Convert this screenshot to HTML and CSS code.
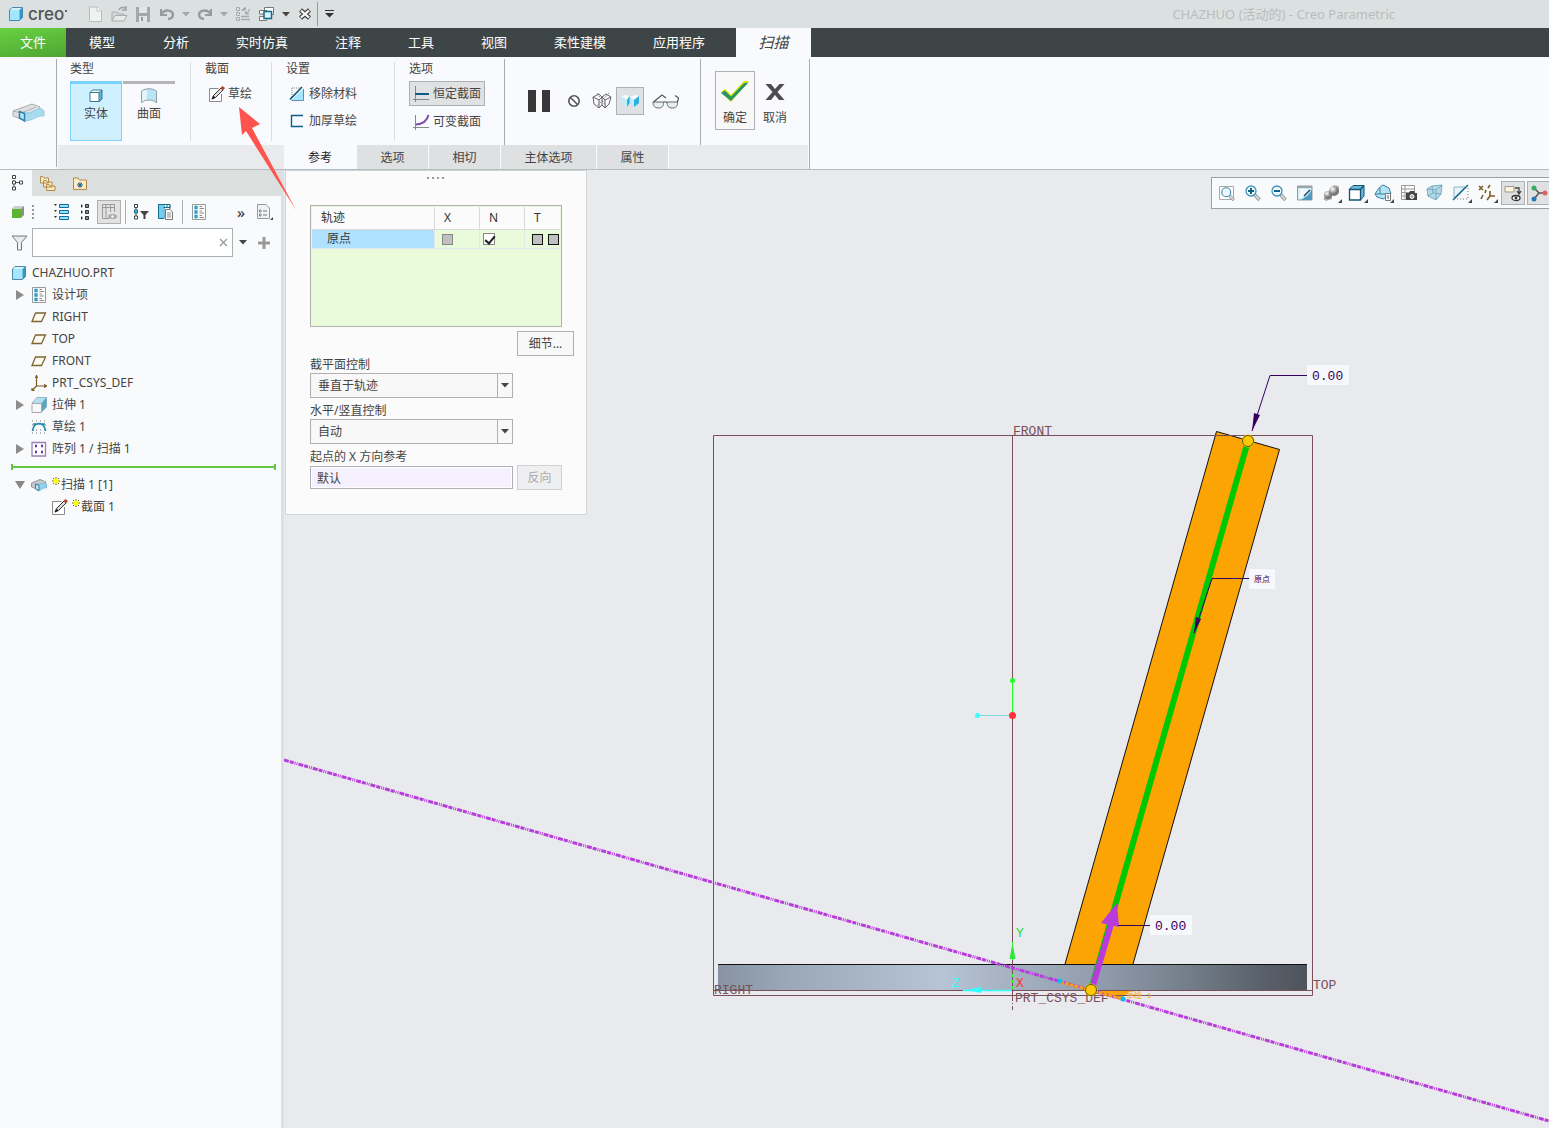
FILE: index.html
```html
<!DOCTYPE html>
<html lang="zh-CN">
<head>
<meta charset="utf-8">
<title>CHAZHUO (活动的) - Creo Parametric</title>
<link rel="stylesheet" href="styles.css">
</head>
<body>
<svg class="sprite" aria-hidden="true">
  <symbol id="cube" viewBox="0 0 16 16"><path d="M1.500 4L4 1.500H14.500L11.500 4z" fill="#d3f3ff"/><path d="M1.500 4H11.500V14.500H1.500z" fill="#a3e6ff"/><path d="M11.500 4L14.500 1.500V11.500L11.500 14.500z" fill="#2e98c8"/><path d="M1.500 4L4 1.500H14.500V11.500L11.500 14.500H1.500z" fill="none" stroke="#4a8aa8"/></symbol>
  <symbol id="caret" viewBox="0 0 8 5"><path d="M0 0H8L4 4.500z" fill="currentColor"/></symbol>
  <symbol id="pencil" viewBox="0 0 17 16"><path d="M10.500 2.500H1.500V15.500H13.500V8" fill="#fff" stroke="#8c8c8c"/><path d="M4 13L5.500 9.500L13 2L15 4L7.500 11.500z" fill="#ddd" stroke="#333"/><path d="M3.500 13.500L5.500 9.500L7.500 11.500z" fill="#222"/><path d="M12.500 2L14.500 0L17 2L15 4.500z" fill="#b5422c"/></symbol>
  <symbol id="sweep" viewBox="0 0 33 20"><path d="M1 8L20 1L28 4L26 8L9 16L1 13z" fill="#dfe1e3" stroke="#a9adaf"/><path d="M1 8L9 10L24 4" fill="none" stroke="#b1b4b6"/><path d="M8 9L15 10C22 10 23 5 30 6L32 8V13C25 12 23 17 13 18L8 15z" fill="#a9dbef" stroke="#8ecbe3"/><path d="M7.500 8.500L12.500 10.500V18L7.500 15z" fill="#c2e6f5" stroke="#2b82aa" stroke-width="1.500"/></symbol>
  <symbol id="list" viewBox="0 0 16 16"><path d="M1.500.5H14.500V15.500H1.500z" fill="#fff" stroke="#999"/><path d="M4 2.500H6V4.500H4zM4 7H6V9H4zM4 11.500H6V13.500H4z" fill="none" stroke="#2098c8" stroke-width="1.300"/><path d="M8.500 2.500H11M8.500 4.500H13M8.500 7H11M8.500 9H13M8.500 11.500H11M8.500 13.500H13" stroke="#888"/></symbol>
  <symbol id="plane" viewBox="0 0 16 16"><path d="M4.500 4H14.500L10.500 12.500H1z" fill="#fdfaf0" stroke="#7c6630" stroke-width="1.300"/></symbol>
  <symbol id="star" viewBox="0 0 8 8"><path d="M4 0V8M0 4H8M1 1L7 7M7 1L1 7" stroke="#6b6500"/><path d="M2 2H6V6H2z" fill="#ff0"/><path d="M4 1V7M1 4H7" stroke="#ff0"/></symbol>
  <symbol id="right" viewBox="0 0 8 10"><path d="M0 0L8 5L0 10z" fill="#8c8c8c"/></symbol>
  <symbol id="mag" viewBox="0 0 18 18"><path d="M10.500 10.500L15.500 16" stroke="#999" stroke-width="3.500"/><path d="M11 11L15 15.500" stroke="#e4e4e4" stroke-width="1.500"/><circle cx="7" cy="7" r="5" fill="#eefaff" stroke="#3f93b3" stroke-width="1.300"/></symbol>
</svg>

<header class="titlebar">
  <div class="brand"><svg width="16" height="16"><use href="#cube"/></svg><span>creo</span><i></i></div>
  <div class="quick">
    <button class="q faded" aria-label="新建"><svg width="16" height="18"><path d="M2.500 2H10L14.500 6V16.500H2.500z" fill="#f0f1f1" stroke="#b9bcbc"/><path d="M10 2V6H14.500" fill="#fff" stroke="#b9bcbc"/></svg></button>
    <button class="q faded" aria-label="打开"><svg width="18" height="18"><path d="M2 16V7H7L8 9H14V11" fill="#d8dada" stroke="#aaadad"/><path d="M2 16L5 10.500H17L14 16z" fill="#e8eaea" stroke="#aaadad"/><path d="M9 5C10 2 13 2 15 3M16 1V5H12" fill="none" stroke="#9da0a0" stroke-width="1.500"/></svg></button>
    <button class="q faded" aria-label="保存"><svg width="16" height="18"><path d="M1 2H15V17H1z" fill="#a5a8a8"/><path d="M4 2H12V8H4zM4 11H12V17H4z" fill="#e3e6e6"/><path d="M6 12H8V16H6z" fill="#999"/></svg></button>
    <button class="q faded" aria-label="撤消"><svg width="18" height="16"><path d="M3 3V9H9" fill="none" stroke="#999c9c" stroke-width="2"/><path d="M3 8C7 3 14 4 15 8C15 11 13 13 10 13" fill="none" stroke="#999c9c" stroke-width="2.500"/></svg></button>
    <button class="c faded" aria-label="撤消列表"><svg width="8" height="5"><use href="#caret"/></svg></button>
    <button class="q faded" aria-label="重做"><svg width="18" height="16"><path d="M15 3V9H9" fill="none" stroke="#999c9c" stroke-width="2"/><path d="M15 8C11 3 4 4 3 8C3 11 5 13 8 13" fill="none" stroke="#999c9c" stroke-width="2.500"/></svg></button>
    <button class="c faded" aria-label="重做列表"><svg width="8" height="5"><use href="#caret"/></svg></button>
    <button class="q faded" aria-label="重新生成"><svg width="16" height="16"><path d="M1.500 1.500H4.500V4.500H1.500zM1.500 6.500H4.500V9.500H1.500zM1.500 11.500H4.500V14.500H1.500z" fill="none" stroke="#999" stroke-dasharray="2 1"/><path d="M6 10.500H14M6 13.500H15" stroke="#aaa" stroke-width="1.500"/><path d="M7 5C8 2 10 2 11 3M10 1V4H7M14 3C15 6 12 7 10 7M11 5V8H14" fill="none" stroke="#999"/></svg></button>
    <button class="q" aria-label="窗口"><svg width="16" height="16"><path d="M5.500 1.500H14.500V8.500H5.500zM.5 4.500H8V8H.5zM.5 10.500H7.500V14.500H.5z" fill="#fff" stroke="#777"/><path d="M5 5.500H12.500V12.500H5z" fill="#d6f3ff" stroke="#12698c" stroke-width="1.500"/></svg></button>
    <button class="c" aria-label="窗口列表"><svg width="8" height="5"><use href="#caret"/></svg></button>
    <button class="q" aria-label="关闭"><svg width="14" height="12"><path d="M2.500 2L11.500 10M11.500 2L2.500 10" stroke="#444" stroke-width="4.500"/><path d="M3 2.500L11 9.500M11 2.500L3 9.500" stroke="#fff" stroke-width="2.200"/></svg></button>
    <button class="more" aria-label="自定义"><svg width="9" height="8"><path d="M0 .5H9" stroke="#333"/><path d="M0 3H9L4.500 7.500z" fill="#333"/></svg></button>
  </div>
  <h1>CHAZHUO (活动的) - Creo Parametric</h1>
</header>

<nav class="menubar">
  <a class="file" href="#file">文件</a><a href="#model">模型</a><a href="#analysis">分析</a><a href="#sim">实时仿真</a><a href="#anno">注释</a><a href="#tools">工具</a><a href="#view">视图</a><a href="#flex">柔性建模</a><a href="#apps">应用程序</a><a class="current" href="#sweep-tab">扫描</a>
</nav>

<section class="ribbon">
  <div class="feature"><svg width="33" height="20"><use href="#sweep"/></svg></div>
  <div class="ribbon-body">
    <div class="groups">
      <section class="group type">
        <h2>类型</h2>
        <div class="tiles">
          <button class="tile on"><svg width="16" height="14" viewBox="0 0 16 14"><path d="M2 3.500L4.500 1H14V10L11.500 13H2z" fill="#5db9de"/><path d="M2 3.500L4.500 1H14L11 3.500z" fill="#fff"/><path d="M2 3.500H11V12.500H2z" fill="#fff"/><path d="M2 3.500L4.500 1H14V10L11.500 12.500H2zM11 3.500L14 1M11 3.500V12.500M2 3.500H11" fill="none" stroke="#357995"/></svg>实体</button>
          <button class="tile"><svg width="18" height="16" viewBox="0 0 18 16"><path d="M1.500 3C6 0 12 0 16.500 3V15C14 11 4 11 1.500 15z" fill="#b9e6f7" stroke="#91a0a8"/><path d="M2 3.500C4 2 5 2 7 2V11.500C4 12 3 13 2 14z" fill="#fff" opacity=".6"/></svg>曲面</button>
        </div>
      </section>
      <section class="group section">
        <h2>截面</h2>
        <button class="cmd"><svg width="17" height="16"><use href="#pencil"/></svg>草绘</button>
      </section>
      <section class="group settings">
        <h2>设置</h2>
        <button class="cmd"><svg width="16" height="16"><path d="M3 2H13M3 2V12" stroke="#888" stroke-dasharray="1 1"/><path d="M2 14.500H14.500V2.500z" fill="#a3e6ff"/><path d="M2.500 14.500H14.500V3" fill="none" stroke="#5b93ab"/><path d="M1 13.500L13 1" stroke="#0c5476" stroke-width="1.600"/></svg>移除材料</button>
        <button class="cmd"><svg width="16" height="16"><path d="M14 2.500H2.500V13.500H14" fill="none" stroke="#0c5f86" stroke-width="1.400"/></svg>加厚草绘</button>
      </section>
      <section class="group choices">
        <h2>选项</h2>
        <button class="cmd on"><svg width="18" height="16"><path d="M2.500 0V16M0 13.500H16" stroke="#888"/><path d="M2 8H16" stroke="#0b5c87" stroke-width="2"/></svg>恒定截面</button>
        <button class="cmd"><svg width="18" height="16"><path d="M2.500 1V16M0 13.500H16" stroke="#888"/><path d="M3 10.500C10 10 14 7 15.500 1" fill="none" stroke="#7c4fb0" stroke-width="2"/></svg>可变截面</button>
      </section>
      <section class="group preview">
        <button aria-label="暂停"><svg width="24" height="22"><path d="M1 0H9V22H1zM15 0H23V22H15z" fill="#383838"/></svg></button>
        <button aria-label="无预览"><svg width="14" height="14"><circle cx="7" cy="7" r="5.200" fill="none" stroke="#555" stroke-width="1.600"/><path d="M3.500 3.500L10.500 10.500" stroke="#555" stroke-width="1.600"/></svg></button>
        <button aria-label="分离"><svg width="20" height="18"><path d="M1 5L7 2L10 5V13L7 16L2 12zM1 5L7 8L10 5M7 8V16M10 5L14 2L19 5L17 12L13 16L10 13M10 5L13 8L19 5M13 8V16" fill="none" stroke="#666"/><path d="M5 1L14 14M17 1L5 14" fill="none" stroke="#888" stroke-dasharray="2 1"/></svg></button>
        <button class="on" aria-label="特征预览"><svg width="20" height="14"><path d="M1 2L5 1L10 4L15 1L19 2V9L14 13L10 9L7 13L1 9z" fill="#9ee0f8"/><path d="M1 2L5 1L9 2L7 6zM10 3L15 1L19 2L14 6z" fill="#fff"/><path d="M7 6L9.500 2V9L7 13zM14 6L19 2V9L14 13z" fill="#30aee0"/><path d="M1 2L7 6V13L1 9zM10.500 3L14 6V13L10.500 9z" fill="#c4edfc"/></svg></button>
        <button aria-label="校验"><svg width="28" height="16"><path d="M1 9H11.500C12 13 10 15 6.500 15C3 15 1 13 1 9zM15 9H25.500C26 13 24 15 20 15C17 15 15 13 15 9z" fill="#e4eef3" stroke="#666"/><path d="M11.500 9.500Q13 8 15 9.500M1.500 9L10 2L14 5M25.500 9L26.500 5L23 2.500" fill="none" stroke="#555" stroke-width="1.200"/></svg></button>
      </section>
      <section class="group confirm">
        <button class="ok"><svg width="30" height="24"><path d="M1 12L5 9L11 15L24 1H29L11 22z" fill="#d9e900"/><path d="M1 13L5 10.500L11 16.500L24 3L28.500 2.500L11 21z" fill="#2c9567"/></svg>确定</button>
        <button class="ok plain"><svg width="22" height="24"><path d="M1.500 4H7L11 9L15.500 4H20.500L13.500 12L20.500 20H15L11 15L7 20H1.500L8.500 12z" fill="#4d4d4d"/></svg>取消</button>
      </section>
    </div>
    <div class="dash-tabs"><button class="current">参考</button><button>选项</button><button>相切</button><button class="wide">主体选项</button><button>属性</button></div>
  </div>
</section>

<main class="workspace">
  <aside class="sidebar">
    <div class="side-tabs">
      <button class="current" aria-label="模型树"><svg width="14" height="18"><path d="M3 6V13M5 8.500H8" stroke="#555"/><path d="M1.500 1.500H4.500V4.500H1.500zM1.500 7H4.500V10H1.500zM8.500 7H11.500V10H8.500zM1.500 13H4.500V16H1.500z" fill="#fff" stroke="#444"/></svg></button>
      <button aria-label="文件夹浏览器"><svg width="18" height="18"><path d="M1.500 2.500H4L5 4H9.500V9H1.500zM4.500 6.500H7L8 8H13V13H4.500zM7.500 10.500H10L11 12H16V16.500H7.500z" fill="#fbe8bd" stroke="#b18a4c"/></svg></button>
      <button aria-label="收藏夹"><svg width="16" height="16"><path d="M1.500 3H6L7.500 5H14.500V14.500H1.500z" fill="#fdebc2" stroke="#b18a4c"/><path d="M8 7V13M5 10H11M6 8L10 12M10 8L6 12" stroke="#135d86"/></svg></button>
    </div>
    <div class="side-tools">
      <button aria-label="模型"><svg width="14" height="16"><path d="M1 5L4 2H13V11L10 14H1z" fill="#8b8f8f"/><path d="M1 5L4 2H13L10 5z" fill="#ccc"/><path d="M1 5H10V14H1z" fill="#5cb531"/></svg></button>
      <svg class="grip" width="2" height="15"><path d="M1 0V15" stroke="#999" stroke-width="2" stroke-dasharray="2 2"/></svg>
      <button class="first" aria-label="展开"><svg width="18" height="18"><path d="M1 1H4L2.500 3zM1 7H4L2.500 9zM1 13H4L2.500 15z" fill="#333"/><path d="M6.500 1.500H15.500V4.500H6.500zM6.500 7.500H15.500V10.500H6.500zM6.500 13.500H15.500V16.500H6.500z" fill="#93e1ff" stroke="#126d95"/></svg></button>
      <button aria-label="折叠"><svg width="14" height="18"><path d="M2 1L4 3L2 5zM2 7L4 9L2 11zM2 13L4 15L2 17z" fill="#333"/><path d="M6.500 1.500H9.500V4.500H6.500zM6.500 7.500H9.500V10.500H6.500zM6.500 13.500H9.500V16.500H6.500z" fill="#888" stroke="#333"/></svg></button>
      <button class="on" aria-label="树列"><svg width="18" height="18"><path d="M2.500 1.500H14.500V4.500H2.500zM2.500 1.500V15.500H9M6 2V15M10.500 2V9M14.500 2V9" fill="none" stroke="#999"/><ellipse cx="12.500" cy="13.500" rx="4.500" ry="2.500" fill="#aaa"/><circle cx="12.500" cy="13.500" r="1.200" fill="#fff"/></svg></button>
      <span class="bar"></span>
      <button aria-label="过滤器"><svg width="18" height="18"><path d="M3 4V14" stroke="#444"/><path d="M1.500 1.500H4.500V4.500H1.500zM1.500 13H4.500V16H1.500z" fill="#fff" stroke="#444"/><path d="M1.500 7H4.500V10H1.500z" fill="#5bbfe6" stroke="#146c93"/><path d="M7 8H16L12.500 12V16H10.500V12z" fill="#444"/></svg></button>
      <button aria-label="列设置"><svg width="18" height="18"><path d="M1.500 1.500H13V4.500H1.500zM1.500 1.500V15.500H7V2M10 2V5M13 2V6" fill="#fff" stroke="#146c93"/><path d="M2 2H6.500V15H2z" fill="#72cdf0"/><path d="M8.500 6.500H13L15.500 9V16.500H8.500z" fill="#fff" stroke="#777"/><path d="M10 10H14M10 12H14M10 14H14" stroke="#888"/></svg></button>
      <span class="bar"></span>
      <button aria-label="设计项"><svg width="16" height="16"><use href="#list"/></svg></button>
      <button class="over" aria-label="更多">»</button>
      <button aria-label="设置"><svg width="18" height="18"><path d="M1.500 1.500H10L13.500 5V15.500H1.500z" fill="#eef2f4" stroke="#999"/><path d="M7 8H11M7 12H11" stroke="#777"/><path d="M3.500 7H5V9H3.500zM3.500 11H5V13H3.500z" fill="none" stroke="#888"/><path d="M17 14V17H14z" fill="#444"/></svg></button>
    </div>
    <div class="search">
      <svg width="18" height="16"><path d="M1 1H16L10.500 7.500V15H6.500V7.500z" fill="#e9ebec" stroke="#777"/><path d="M8 8V14" stroke="#fff"/></svg>
      <div class="search-box"><input type="text" aria-label="搜索"><button aria-label="清除"><svg width="9" height="9"><path d="M1 1L8 8M8 1L1 8" stroke="#999" stroke-width="1.300"/></svg></button></div>
      <button aria-label="搜索选项"><svg width="8" height="5"><use href="#caret"/></svg></button>
      <button aria-label="添加"><svg width="12" height="12"><path d="M6 0V12M0 6H12" stroke="#999" stroke-width="3"/></svg></button>
    </div>
    <ul class="tree">
      <li class="root"><svg width="16" height="16"><use href="#cube"/></svg>CHAZHUO.PRT</li>
      <li><svg class="tw" width="8" height="10"><use href="#right"/></svg><svg width="16" height="16"><use href="#list"/></svg>设计项</li>
      <li><svg width="16" height="16"><use href="#plane"/></svg>RIGHT</li>
      <li><svg width="16" height="16"><use href="#plane"/></svg>TOP</li>
      <li><svg width="16" height="16"><use href="#plane"/></svg>FRONT</li>
      <li><svg width="16" height="16"><path d="M5.500 11V1M4.500 3L5.500 .5L6.500 3M5.500 11H15M13 9.500L15.500 11L13 12.500M5.500 11L1 15.500M1 13V15.500H3.500" fill="none" stroke="#7c5b24" stroke-width="1.200"/></svg>PRT_CSYS_DEF</li>
      <li><svg class="tw" width="8" height="10"><use href="#right"/></svg><svg width="16" height="16"><path d="M1 6L6 .5H15.500V10L10.500 15z" fill="#b5dff0" stroke="#8fb4c4"/><path d="M6 .5L10.500 6L15.500 .5V10L10.500 15V6z" fill="#5fa5c2"/><path d="M1 6.500H10.500V15.500H1z" fill="#f8f8f8" stroke="#aaa"/></svg>拉伸 1</li>
      <li><svg width="16" height="16"><path d="M1 2H15M1 14H15M1 6H2M14 6H15M5 11H11" stroke="#777" stroke-dasharray="1 3"/><path d="M1.500 12C3 2 13 2 14.500 12M2 5L14 5" fill="none" stroke="#2587ad" stroke-width="1.700"/></svg>草绘 1</li>
      <li><svg class="tw" width="8" height="10"><use href="#right"/></svg><svg width="16" height="16"><path d="M1 1.500H14.500V15H1z" fill="#fff" stroke="#9b82b5" stroke-width="1.300"/><path d="M4 5H6M10 5H12M4 11H6M10 11H12" stroke="#6336a5" stroke-width="2.500"/></svg>阵列 1 / 扫描 1</li>
      <li class="insert"><i></i></li>
      <li><svg class="tw down" width="10" height="8"><path d="M0 0H10L5 8z" fill="#888"/></svg><svg width="16" height="16" viewBox="0 0 16 16"><path d="M.5 6L9 2.500L15 5L13 8L6 12L.5 10z" fill="#c6c9cb" stroke="#999"/><path d="M5 7C10 8 11 5 15.500 7V11C12 10 11 13 7 14L5 12z" fill="#95d2ea" stroke="#77b8d3"/><path d="M4.500 7L8 8.500V13.500L4.500 12z" fill="#c2e6f5" stroke="#2b82aa"/></svg><span><svg class="star" width="8" height="8"><use href="#star"/></svg>扫描 1 [1]</span></li>
      <li class="deep"><svg width="17" height="16"><use href="#pencil"/></svg><span><svg class="star" width="8" height="8"><use href="#star"/></svg>截面 1</span></li>
    </ul>
  </aside>

  <section class="canvas">
    <svg class="scene" viewBox="284 170 1265 958" preserveAspectRatio="xMinYMin slice" role="img" aria-label="扫描特征预览">
      <defs><linearGradient id="metal"><stop offset="0" stop-color="#8793a0"/><stop offset=".12" stop-color="#9aa8b8"/><stop offset=".38" stop-color="#b7c4d5"/><stop offset=".5" stop-color="#a5b0c0"/><stop offset=".64" stop-color="#929eae"/><stop offset=".8" stop-color="#737e8a"/><stop offset=".93" stop-color="#585f68"/><stop offset="1" stop-color="#4d545c"/></linearGradient></defs>
      <path d="M718 964H1307V990H718z" fill="url(#metal)"/>
      <path d="M1065 964L1216.500 431.500L1279.500 449.500L1133 964z" fill="#fda405"/>
      <path d="M1065 964L1216.500 431.500L1279.500 449.500L1133 964M718 964.500H1307" fill="none" stroke="#111"/>
      <path d="M1091 990L1130 991L1122 998z" fill="#fda405"/>
      <g fill="none" stroke="#79505a"><path d="M713.500 435.500H1312.500V995.500H713.500zM713.500 990.500H1312.500M1012.500 435V994"/><path d="M1012.500 994V1010" stroke-dasharray="7 2 1 2"/></g>
      <g class="cad brown"><text x="1013" y="435">FRONT</text><text x="714" y="994">RIGHT</text><text x="1313" y="989">TOP</text><text x="1015" y="1002">PRT_CSYS_DEF</text></g>
      <path d="M1248 441L1091 990" stroke="#00c800" stroke-width="6"/>
      <path d="M284 760L1549 1121" stroke="#b83cdc" stroke-width="3" stroke-dasharray="5 1 4 1 1 1 1 1"/>
      <path d="M1060 982L1123 999" stroke="#f7a020" stroke-width="3" stroke-dasharray="4 1"/>
      <circle cx="1060" cy="981" r="2.500" fill="#08bdf0"/><circle cx="1123" cy="999" r="2.500" fill="#08bdf0"/>
      <path d="M1092 989L1112 921" stroke="#b83cdc" stroke-width="6"/><path d="M1117 903L1119 927L1101 923z" fill="#b83cdc"/>
      <g fill="none" stroke="#35005d"><path d="M1307 375.500H1270L1252 431M1249 578.500H1212L1194 633M1150 925.500H1118"/></g>
      <path d="M1254 413L1260 415L1252 431zM1196 617L1201 619L1194 634z" fill="#35005d"/>
      <path d="M1307 365H1349V385H1307zM1249 569H1275V589H1249zM1150 915H1192V935H1150z" fill="#f7f8fb"/>
      <g class="cad dark"><text x="1312" y="380">0.00</text><text x="1155" y="930">0.00</text><text class="small" x="1254" y="582">原点</text></g>
      <g fill="#ffc60a" stroke="#ffd000" stroke-width="3"><circle cx="1248" cy="441" r="5"/><circle cx="1091" cy="990" r="5"/></g>
      <g fill="none" stroke="#625019"><circle cx="1248" cy="441" r="5.500"/><circle cx="1091" cy="990" r="5.500"/></g>
      <g fill="none"><path d="M1012.500 680V715" stroke="#2f2"/><path d="M977 715.500H1012" stroke="#79d8e2"/><path d="M1012.500 942V960" stroke="#2f2"/><path d="M1012.500 974V990" stroke="#2f2" stroke-dasharray="3 3"/><path d="M963 990.500H1012" stroke="#3ff" stroke-width="1.500"/></g>
      <circle cx="1012.500" cy="680.500" r="2.500" fill="#2f2"/><circle cx="977.500" cy="715.500" r="2.500" fill="#3ff"/><circle cx="1012.500" cy="715.500" r="3.500" fill="#f33"/>
      <path d="M1012.500 943L1015.500 959H1009.500z" fill="#30e838"/><path d="M966 990L981 987V993z" fill="#3ff"/>
      <g class="cad"><text x="1016" y="937" fill="#2d3">Y</text><text x="1016" y="987" fill="#f33">X</text><text x="952" y="987" fill="#3ff">Z</text><text class="small" x="1126" y="998" fill="#fda405">草绘 1</text></g>
    </svg>

    <div class="view-tools">
      <button aria-label="重新调整"><svg width="18" height="18"><path d="M1.500 2.500H15.500V15.500H1.500z" fill="#fff" stroke="#aaa"/><use href="#mag" x="2" y="2" width="16" height="16"/></svg></button>
      <button aria-label="放大"><svg width="18" height="18"><use href="#mag"/><path d="M4 7H10M7 4V10" stroke="#0e5f85" stroke-width="2"/></svg></button>
      <button aria-label="缩小"><svg width="18" height="18"><use href="#mag"/><path d="M4 7H10" stroke="#0e5f85" stroke-width="2"/></svg></button>
      <button aria-label="重画"><svg width="18" height="18"><path d="M1.500 2H16V16H1.500z" fill="#d3edf7" stroke="#999"/><path d="M16 5C14 11 9 13 5 16H16z" fill="#4b9cbe"/><path d="M2 2H16V4H2z" fill="#9aa5aa"/><path d="M4 5H14L6 14H3z" fill="#fff" opacity=".7"/><path d="M8 12L14 6" stroke="#246" stroke-width="1.500"/></svg></button>
      <button class="menu" aria-label="渲染"><svg width="18" height="18"><defs><radialGradient id="ball" cx=".35" cy=".3"><stop stop-color="#fff"/><stop offset="1" stop-color="#777"/></radialGradient></defs><path d="M1 15L9 10L10 15L4 17z" fill="#aaa"/><circle cx="6" cy="11" r="4" fill="url(#ball)"/><path d="M11 1L17 2V9L12 11z" fill="#bbb"/><circle cx="12" cy="7" r="5" fill="url(#ball)"/></svg></button>
      <button class="menu" aria-label="显示样式"><svg width="18" height="18"><path d="M1.500 5L5 1.500H16V12L12.500 16z" fill="#67b9d7" stroke="#115371"/><path d="M1.500 5.500H12.500V16H1.500zM12.500 5.500L16 1.500" fill="#fff" stroke="#115371" stroke-width="1.300"/></svg></button>
      <button class="menu" aria-label="已保存方向"><svg width="18" height="18"><path d="M1 10L5 4L9 1L15 4L17 10L14 12L9 15L3 13z" fill="#b6e3f3" stroke="#3684a5"/><path d="M6 4V10M1 10H17" stroke="#3684a5"/><path d="M11.500 9.500H16.500V16.500H11.500z" fill="#fff" stroke="#777"/><path d="M13 12H15M13 14H15" stroke="#555"/></svg></button>
      <button aria-label="视图管理器"><svg width="18" height="18"><path d="M1.500 1.500H14.500V15.500H1.500zM1 5H15M1 8.500H15M1 12H15M5 1V15" fill="#fff" stroke="#999"/><path d="M6 9H9L10 7H14L15 9H17V16H6z" fill="#444"/><circle cx="12" cy="12.500" r="2" fill="#aaa" stroke="#fff"/></svg></button>
      <button aria-label="透视图"><svg width="18" height="18"><path d="M1 5L6 2L16 1L15 10L10 16L2 12z" fill="#b4d9e7" stroke="#78abc0"/><path d="M1 5L10 6L16 1M10 6V16M6 2L7 9L15 10M7 9L2 12" fill="none" stroke="#78abc0"/></svg></button>
      <button class="menu" aria-label="截面显示"><svg width="18" height="18"><path d="M2 14V3H13L2 14" fill="#e7f5fb" stroke="#86b3c7"/><path d="M16 4V15H5" fill="none" stroke="#777" stroke-dasharray="1 2"/><path d="M1 16L16 1" stroke="#14688e" stroke-width="1.400"/></svg></button>
      <button class="menu" aria-label="基准显示"><svg width="18" height="18"><path d="M1 2L5 6M5 2L1 6M12 1L10 4M8 6L7 9M5 11L3 15M12 7V12H17M12 12L9 16" stroke="#7c5b24" stroke-width="1.600" fill="none"/></svg></button>
      <button class="on" aria-label="注释显示"><svg width="18" height="18"><path d="M1 2.500H10V8H1z" fill="#fff3d8" stroke="#999"/><path d="M11 4H15V9M13 7L15 10L17 7" fill="none" stroke="#444" stroke-width="1.300"/><ellipse cx="12" cy="14" rx="4" ry="2.500" fill="#fff" stroke="#333" stroke-width="1.300"/><circle cx="12" cy="14" r="1.400" fill="#333"/></svg></button>
      <button class="on" aria-label="旋转中心"><svg width="18" height="18"><path d="M4 4L9 9H15M9 9L4 15" fill="none" stroke="#555" stroke-width="1.500"/><circle cx="4" cy="4" r="2.500" fill="#35aa60"/><circle cx="4" cy="15" r="2.500" fill="#2779b5"/><circle cx="15" cy="9" r="2.500" fill="#e46060"/></svg></button>
    </div>

    <form class="panel">
      <div class="dots"><i></i><i></i><i></i><i></i></div>
      <div class="grid-box">
        <table>
          <thead><tr><th class="name">轨迹</th><th>X</th><th>N</th><th class="last">T</th></tr></thead>
          <tbody><tr><td class="name">原点</td><td><input type="checkbox" disabled aria-label="X"></td><td class="n"><input type="checkbox" checked aria-label="N"></td><td class="last"><input class="strong" type="checkbox" disabled aria-label="T 侧 1"><input class="strong" type="checkbox" disabled aria-label="T 侧 2"></td></tr></tbody>
        </table>
      </div>
      <button class="btn details" type="button">细节...</button>
      <label for="plane-control">截平面控制</label>
      <div class="select"><select id="plane-control"><option>垂直于轨迹</option></select><svg width="8" height="5"><use href="#caret"/></svg></div>
      <label for="hv-control">水平/竖直控制</label>
      <div class="select"><select id="hv-control"><option>自动</option></select><svg width="8" height="5"><use href="#caret"/></svg></div>
      <label for="x-ref">起点的 X 方向参考</label>
      <div class="ref"><input id="x-ref" type="text" value="默认"><button class="btn" type="button" disabled>反向</button></div>
    </form>
  </section>
</main>
<svg class="pointer" width="60" height="106" aria-hidden="true"><path d="M1 1L22 18L14 22L58 104L8 25L4 29z" fill="#ff5350"/></svg>
</body>
</html>
```
FILE: styles.css
```css
* { box-sizing: border-box; }
body {
  margin: 0;
  min-height: 100vh;
  display: flex;
  flex-direction: column;
  position: relative;
  overflow-x: hidden;
  font: 12px/18px "Noto Sans", "Noto Sans CJK SC", sans-serif;
  color: #444;
  background: #f8fafc;
}
button, input, select { font: inherit; color: inherit; margin: 0; }
button {
  display: inline-flex;
  align-items: center;
  justify-content: center;
  padding: 0;
  border: 0;
  background: none;
}
svg { flex: none; display: block; }
h1, h2 { margin: 0; font-size: 12px; font-weight: 400; }
.sprite { position: absolute; width: 0; height: 0; }
.pointer { position: absolute; left: 238px; top: 106px; pointer-events: none; }

/* Title bar */
.titlebar { display: flex; align-items: center; height: 28px; padding-left: 8px; background: #dbe0e0; }
.brand { display: flex; align-items: center; gap: 4px; width: 75px; }
.brand span { font: 500 17px/24px Inter, sans-serif; color: #555; }
.brand i { width: 2px; height: 2px; margin: 0 0 6px -3px; background: #666; }
.quick { display: flex; align-items: stretch; height: 24px; }
.q { width: 24px; }
.c { width: 14px; }
.more { width: 23px; border-left: 1px solid #999; }
.faded { color: #a5a8a8; }
.titlebar h1 { margin-left: auto; padding-right: 154px; font-size: 13px; color: #b9bdbd; }

/* Menu bar */
.menubar { display: flex; height: 29px; line-height: 29px; font-size: 13px; background: #3d4546; }
.menubar a { padding: 0 24px 0 23px; color: #fff; text-decoration: none; white-space: nowrap; }
.menubar .file { width: 66px; padding: 0; text-align: center; background: linear-gradient(170deg, #68d142, #4ea532); }
.menubar .file + a { padding-right: 25px; }
.menubar .current { width: 75px; margin-left: 7px; padding: 0; text-align: center; font-size: 15px; font-style: italic; color: #444; background: #f9fafd; }

/* Ribbon */
.ribbon { display: flex; height: 113px; background: #f9fafd; border-bottom: 1px solid #b4bcc0; }
.feature { width: 57px; margin: 2px 0; padding: 44px 0 0 12px; border-right: 1px solid #a9abae; }
.ribbon-body { display: flex; flex-direction: column; margin: 2px 0 0; padding: 0 1px; border-right: 1px solid #a9abae; }
.groups { display: flex; height: 86px; }
.group { padding-left: 14px; position: relative; border-right: 1px solid #dadcdf; margin: 3px 0 4px; }
.group h2 { line-height: 14px; margin-bottom: 5px; }
.type { width: 133px; padding-left: 12px; }
.section { width: 81px; }
.settings { width: 123px; }
.choices { width: 110px; margin: 0; padding-top: 3px; border-color: #a9abae; }
.preview { width: 196px; margin: 0; padding: 0 0 2px 20px; display: flex; align-items: center; border-color: #a9abae; }
.confirm { display: flex; width: 107px; margin: 0; padding-top: 12px; border: 0; }
.tiles { display: flex; gap: 1px; }
.tile { width: 52px; height: 60px; flex-direction: column; justify-content: flex-start; gap: 1px; padding-top: 4px; border-top: 3px solid #b5b5b5; }
.tile svg { height: 16px; }
.tile.on { background: #cff0ff; border: 1px solid #78d2fb; border-top-width: 3px; }
.cmd { height: 25px; display: flex; gap: 3px; padding: 0 2px; margin-bottom: 2px; border: 1px solid transparent; }
.settings .cmd { gap: 4px; }
.choices .cmd { padding: 0 3px; gap: 2px; margin-bottom: 3px; }
.on { background: #e0e1e3; border: 1px solid #b0b0b0; }
.preview button { width: 28px; height: 28px; }
.preview button:first-child { width: 28px; margin-right: 7px; }
.preview button:last-child { width: 36px; margin-left: 4px; }
.ok { width: 40px; height: 59px; flex-direction: column; gap: 5px; padding-top: 5px; border: 1px solid #b0b0b0; background: #f8f8f8; }
.ok.plain { border-color: transparent; background: none; }
.dash-tabs { display: flex; gap: 1px; height: 25px; padding-left: 226px; background: #e9eaeb; }
.dash-tabs button { width: 71px; padding-top: 2px; background: #dfe0e2; box-shadow: 1px 0 #f9fafd; }
.dash-tabs .current { width: 72px; background: #f9fafd; color: #222; }
.dash-tabs .wide { width: 95px; }

/* Model tree */
.workspace { flex: 1; display: flex; }
.sidebar { width: 284px; flex: none; border-right: 3px solid #dbe0e1; background: #f8fafc; }
.side-tabs { display: flex; height: 26px; background: #dbe0df; }
.side-tabs button { width: 32px; }
.side-tabs .current { background: #f8fafc; padding-left: 3px; }
.side-tools { display: flex; align-items: center; height: 32px; padding-left: 11px; }
.side-tools button { width: 24px; height: 24px; flex: none; }
.side-tools button:first-child { width: 14px; margin-right: 7px; }
.side-tools .first { margin-left: 16px; }
.side-tools .first + button + button { margin-left: -1px; }
.side-tools .bar { width: 1px; height: 24px; margin: 0 4px; background: #aaadaf; }
.side-tools .over { width: 20px; margin: 0 2px 0 20px; font-size: 15px; font-weight: 500; }
.search { display: flex; align-items: center; height: 29px; padding-left: 11px; gap: 3px; }
.search-box { display: flex; width: 201px; height: 29px; border: 1px solid #a9b0b3; background: #fff; }
.search-box input { flex: 1; min-width: 0; border: 0; outline: 0; background: none; }
.search button { width: 18px; }
.search-box + button { margin-left: -2px; }
.tree { list-style: none; margin: 5px 0 0; padding: 0; }
.tree li { display: flex; align-items: center; gap: 5px; height: 22px; padding-left: 31px; position: relative; white-space: pre; }
.tree .root { padding-left: 11px; }
.tree .deep { padding-left: 51px; gap: 4px; }
.tree .tw { margin: 0 2px 0 -15px; }
.tree .down { margin: 0 1px 0 -16px; }
.tree .star { display: inline-block; margin-right: 1px; vertical-align: 4px; }
.tree .insert { height: 14px; padding: 0 5px 0 11px; }
.insert i { flex: 1; height: 6px; border: solid #62c843; border-width: 0 2px; background: linear-gradient(#62c843, #62c843) center / 100% 2px no-repeat; }

/* Graphics area */
.canvas { flex: 1; min-width: 0; position: relative; overflow: hidden; background: #e8eaee; }
.scene { position: absolute; inset: 0; width: 100%; height: 100%; }
.cad { font: 13px "Liberation Mono", "Noto Sans CJK SC", monospace; }
.cad .small { font-size: 8px; }
.brown { fill: #79505a; }
.dark { fill: #35005d; }
.view-tools { position: absolute; top: 7px; right: -5px; display: flex; align-items: center; gap: 2px; height: 32px; padding: 0 2px 0 3px; border: 1px solid #9da0a3; background: #f9fafc; }
.view-tools button { width: 24px; height: 24px; position: relative; }
.menu::after { content: ""; position: absolute; right: 1px; bottom: 2px; border: 2px solid #444; border-top-color: transparent; border-left-color: transparent; }

/* Dashboard panel */
.panel { position: absolute; left: 1px; top: 0; width: 302px; padding: 6px 12px 24px 24px; border: 1px solid #d0d4d6; background: #fbfbfb; }
.dots { display: flex; justify-content: center; gap: 3px; height: 28px; padding-right: 14px; }
.dots i { width: 2px; height: 2px; background: #999; }
.grid-box { width: 252px; height: 122px; padding: 1px; border: 1px solid #b0b0b0; background: #eafbdc; }
table { width: 100%; border-collapse: separate; border-spacing: 0; table-layout: fixed; }
th, td { height: 23px; padding: 0 0 0 9px; border-right: 1px solid #d7d9da; border-bottom: 1px solid #d7d9da; text-align: left; font-weight: 400; color: #333; background: #fbfbfb; width: 45px; }
td { height: 19px; background: #eafbdc; border-color: #e4e8ee; padding-left: 7px; }
th.name, td.name { width: 123px; }
td.name { padding-left: 15px; background: #b0e2ff; }
td.n { padding-left: 3px; }
.last { border-right: 0; width: auto; white-space: nowrap; overflow: hidden; }
td.last { padding-left: 7px; }
td input { appearance: none; display: inline-block; width: 11px; height: 11px; margin: 0 5px 0 0; border: 1px solid #888; background: #c0c0c0; vertical-align: middle; }
td .strong { border-color: #111; }
td input:checked { position: relative; width: 12px; height: 12px; background: #fff; }
td input:checked::after { content: ""; position: absolute; left: 3px; top: 0; width: 4px; height: 8px; border: solid #222; border-width: 0 2px 2px 0; transform: rotate(40deg); }
td.n input { display: block; }
.btn { height: 25px; border: 1px solid #b0b0b0; background: #f8f8f8; }
.details { width: 57px; margin: 4px 0 0 207px; }
.panel label { display: block; height: 17px; line-height: 17px; }
.select { position: relative; width: 203px; height: 25px; margin-bottom: 4px; }
.select select { appearance: none; width: 100%; height: 100%; padding: 0 20px 0 7px; border: 1px solid #b0b0b0; border-radius: 0; background: linear-gradient(#b0b0b0, #b0b0b0) right 14px top / 1px 100% no-repeat #f8f8f8; }
.select svg { position: absolute; right: 4px; top: 10px; pointer-events: none; }
.ref { display: flex; align-items: center; gap: 4px; }
.ref input { width: 203px; height: 23px; padding: 0 6px; border: 1px solid #b0b0b8; background: #f5f1ff; box-shadow: inset 0 0 0 1px #fff; }
.ref .btn { width: 45px; }
.ref .btn:disabled { color: #aaa; border-color: #d0d0d0; background: #eeeff0; }
```
